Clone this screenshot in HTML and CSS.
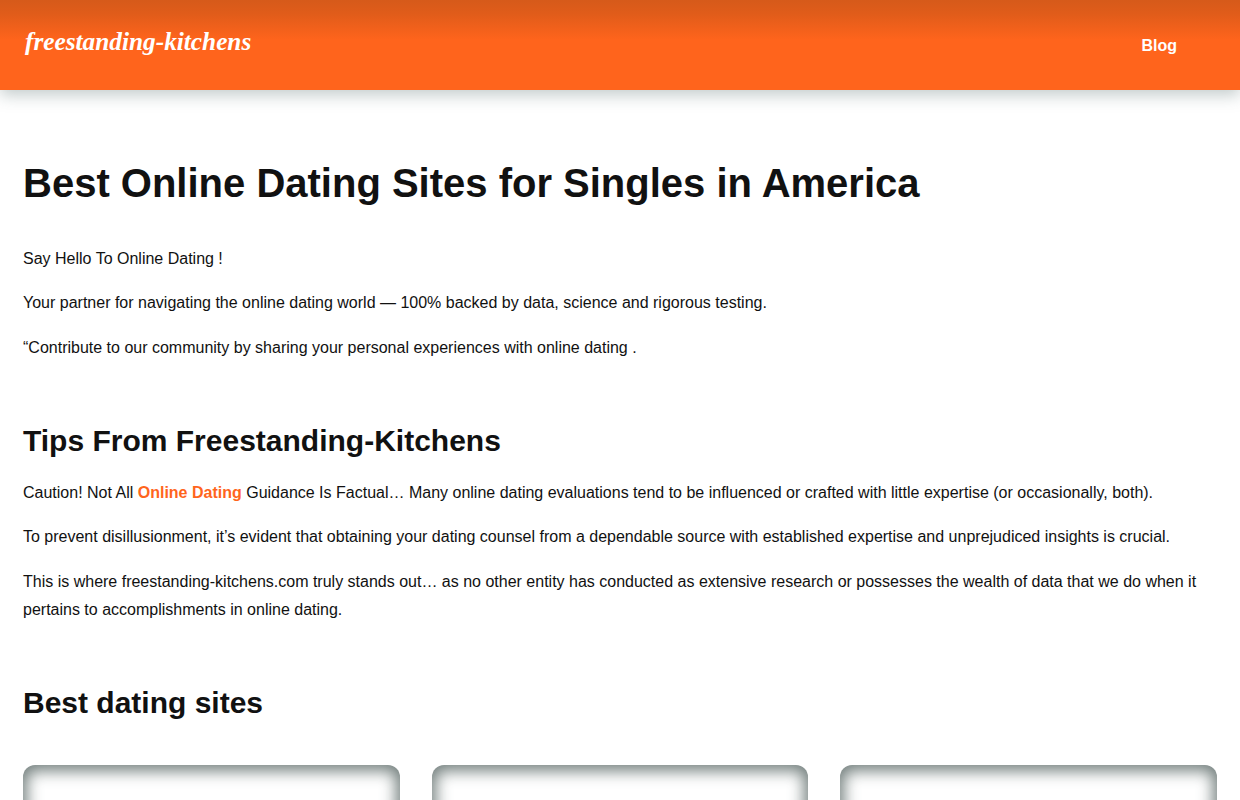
FILE: index.html
```html
<!DOCTYPE html>
<html lang="en">
<head>
<meta charset="utf-8">
<title>Best Online Dating Sites for Singles in America</title>
<link rel="stylesheet" href="styles.css">
</head>
<body>
<header class="site-header">
  <a class="logo" href="#">freestanding-kitchens</a>
  <nav class="nav"><a class="nav-link" href="#">Blog</a></nav>
</header>
<main class="content">
  <h1 class="title">Best Online Dating Sites for Singles in America</h1>
  <section class="intro">
    <p class="para">Say Hello To Online Dating !</p>
    <p class="para">Your partner for navigating the online dating world — 100% backed by data, science and rigorous testing.</p>
    <p class="para">“Contribute to our community by sharing your personal experiences with online dating .</p>
  </section>
  <h2 class="heading">Tips From Freestanding-Kitchens</h2>
  <section class="tips">
    <p class="para">Caution! Not All <a class="accent" href="#">Online Dating</a> Guidance Is Factual… Many online dating evaluations tend to be influenced or crafted with little expertise (or occasionally, both).</p>
    <p class="para">To prevent disillusionment, it’s evident that obtaining your dating counsel from a dependable source with established expertise and unprejudiced insights is crucial.</p>
    <p class="para">This is where freestanding-kitchens.com truly stands out… as no other entity has conducted as extensive research or possesses the wealth of data that we do when it pertains to accomplishments in online dating.</p>
  </section>
  <h2 class="heading">Best dating sites</h2>
  <div class="cards">
    <article class="card"></article>
    <article class="card"></article>
    <article class="card"></article>
  </div>
</main>
</body>
</html>
```
FILE: styles.css
```css
* { box-sizing: border-box; }
html, body { margin: 0; padding: 0; height: 800px; overflow: hidden; background: #fff; }
body { font-family: "Liberation Sans", Arial, sans-serif; font-size: 16px; line-height: 28px; color: #111; }
.site-header {
  height: 90px;
  display: flex;
  align-items: center;
  justify-content: space-between;
  padding: 0 63px 0 25px;
  background: linear-gradient(to bottom, #d65a1a 0%, #e05c1a 15%, #ff641c 45%, #ff641c 100%);
  box-shadow: 0 5px 15px rgba(120, 140, 140, .45);
}
.logo {
  font-family: "Liberation Serif", serif;
  font-style: italic;
  font-weight: 700;
  font-size: 25.3px;
  line-height: 36px;
  color: #fff;
  text-decoration: none;
  margin-top: -9px;
}
.nav { margin-top: 1px; }
.nav-link { font-weight: 700; color: #fff; text-decoration: none; }
.content { padding: 0 23px; }
.title { margin: 70px 0 0; font-size: 40px; line-height: 46px; font-weight: 700; }
.intro { margin-top: 38.9px; }
.para { margin: 0 0 16.5px; }
.heading { margin: 61.1px 0 0; font-size: 30px; line-height: 36px; font-weight: 700; }
.tips { margin-top: 19.9px; }
.accent { color: #ff651c; font-weight: 700; text-decoration: none; }
.cards { display: grid; grid-template-columns: repeat(3, 1fr); gap: 32px; margin-top: 44px; }
.card { height: 300px; border-radius: 12px; background: #fff; box-shadow: inset 0 2px 15px 4px rgba(90, 105, 102, .85); }
```
